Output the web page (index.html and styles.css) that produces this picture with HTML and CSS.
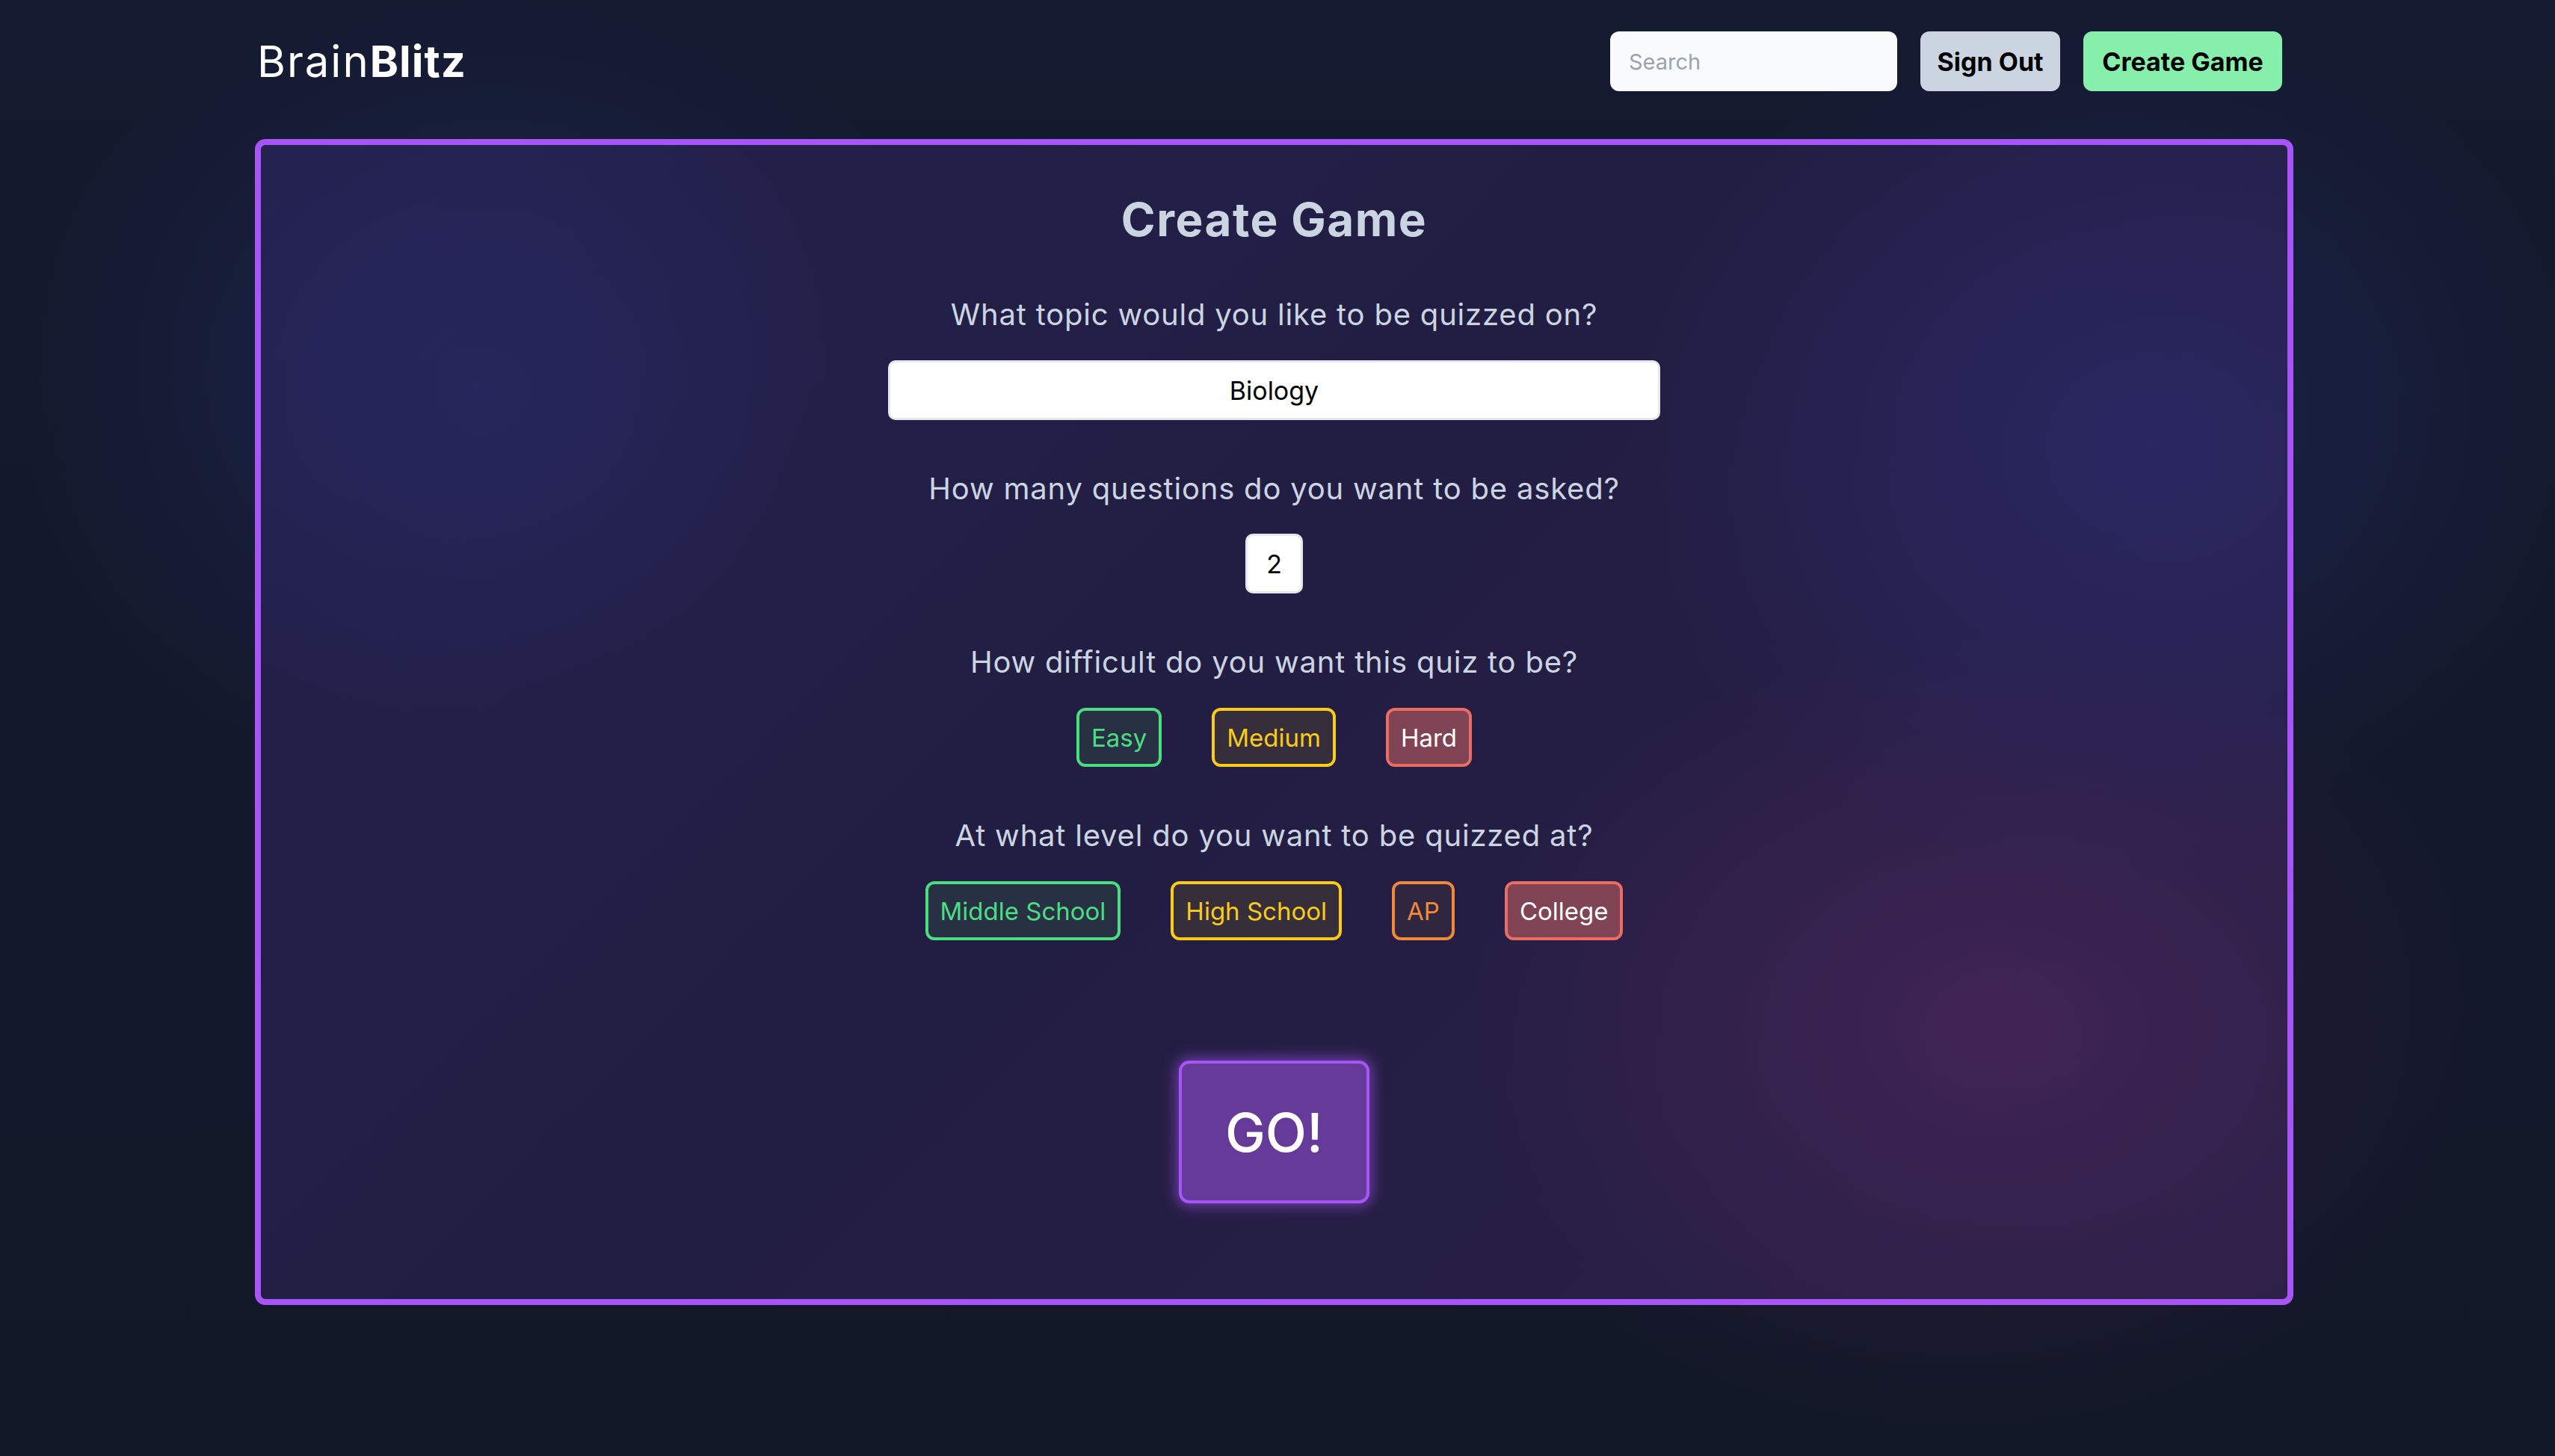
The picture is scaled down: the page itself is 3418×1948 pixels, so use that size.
FILE: index.html
```html
<!DOCTYPE html>
<html lang="en">
<head>
<meta charset="utf-8">
<title>BrainBlitz - Create Game</title>
<link rel="stylesheet" href="styles.css">
</head>
<body>
<div class="page">
  <header class="topbar">
    <div class="logo">Brain<b>Blitz</b></div>
    <nav class="actions">
      <input class="search" type="text" placeholder="Search">
      <button class="btn btn-signout">Sign Out</button>
      <button class="btn btn-create">Create Game</button>
    </nav>
  </header>

  <main class="card">
    <h1 class="title">Create Game</h1>

    <p class="question q-first">What topic would you like to be quizzed on?</p>
    <input class="topic" type="text" value="Biology">

    <p class="question">How many questions do you want to be asked?</p>
    <input class="count" type="text" value="2">

    <p class="question">How difficult do you want this quiz to be?</p>
    <div class="choices">
      <button class="chip chip-green">Easy</button>
      <button class="chip chip-yellow">Medium</button>
      <button class="chip chip-red">Hard</button>
    </div>

    <p class="question">At what level do you want to be quizzed at?</p>
    <div class="choices">
      <button class="chip chip-green">Middle School</button>
      <button class="chip chip-yellow">High School</button>
      <button class="chip chip-orange">AP</button>
      <button class="chip chip-red">College</button>
    </div>

    <button class="go">GO!</button>
  </main>
</div>
</body>
</html>
```

FILE: styles.css
```css
* { box-sizing: border-box; }

html, body {
  margin: 0;
  padding: 0;
}

body {
  min-height: 1948px;
  font-family: "Inter", "Noto Sans", sans-serif;
  color: #cbd5e1;
  background-color: #131829;
  background-image:
    radial-gradient(ellipse 900px 800px at 660px 520px, rgba(40, 52, 130, 0.35), rgba(40, 52, 130, 0) 70%),
    radial-gradient(ellipse 900px 800px at 2830px 560px, rgba(40, 52, 130, 0.35), rgba(40, 52, 130, 0) 70%),
    radial-gradient(ellipse 1000px 800px at 2620px 1350px, rgba(95, 35, 90, 0.30), rgba(95, 35, 90, 0) 70%),
    linear-gradient(180deg, #141a2f 0%, #131828 100%);
}

.page {
  padding-left: 341px;
  width: 3068px;
}

/* ---------- header ---------- */
.topbar {
  display: flex;
  align-items: center;
  justify-content: space-between;
  padding: 42px 15px 0 3px;
  height: 122px;
}

.logo {
  font-size: 58px;
  font-weight: 400;
  color: #ffffff;
  letter-spacing: 2px;
  line-height: 80px;
}
.logo b { font-weight: 700; letter-spacing: 1px; }

.actions {
  display: flex;
  align-items: center;
  gap: 31px;
}

.search {
  width: 384px;
  height: 80px;
  border: none;
  border-radius: 12px;
  background: #f8fafc;
  padding: 0 25px;
  font-family: inherit;
  font-size: 29px;
  color: #111;
  outline: none;
}
.search::placeholder { color: #9ca3af; }

.btn {
  height: 80px;
  border: none;
  border-radius: 12px;
  font-family: inherit;
  font-size: 34px;
  font-weight: 700;
  color: #000;
  padding: 0;
  white-space: nowrap;
  cursor: pointer;
}
.btn-signout { background: #cbd5e1; width: 187px; }
.btn-create { background: #86efac; width: 266px; }

/* ---------- card ---------- */
.card {
  margin-top: 64px;
  height: 1560px;
  border: 8px solid #a855f7;
  border-radius: 14px;
  display: flex;
  flex-direction: column;
  align-items: center;
  padding-top: 61px;
  background-color: #211d41;
  background-image:
    radial-gradient(ellipse 700px 650px at 300px 330px, rgba(45, 50, 125, 0.35), rgba(45, 50, 125, 0) 70%),
    radial-gradient(ellipse 1000px 850px at 2530px 400px, rgba(48, 52, 140, 0.42), rgba(48, 52, 140, 0) 70%),
    radial-gradient(ellipse 1000px 750px at 2320px 1180px, rgba(85, 40, 95, 0.55), rgba(85, 40, 95, 0) 70%),
    linear-gradient(135deg, #23224f 0%, #221d42 45%, #2a2048 100%);
}

.title {
  margin: 0;
  font-size: 62px;
  font-weight: 700;
  letter-spacing: 1.5px;
  line-height: 78px;
  color: #cbd5e1;
}

.question {
  margin: 61px 0 0;
  font-size: 40px;
  line-height: 61px;
  font-weight: 400;
  letter-spacing: 0.8px;
  color: #cbd5e1;
}
.question.q-first { margin-top: 57px; }

.topic {
  margin-top: 31px;
  width: 1033px;
  height: 80px;
  border: 3px solid #e5e7eb;
  border-radius: 10px;
  background: #ffffff;
  text-align: center;
  font-family: inherit;
  font-size: 34px;
  color: #000;
  outline: none;
}

.count {
  margin-top: 30px;
  width: 77px;
  height: 80px;
  border: 3px solid #e5e7eb;
  border-radius: 10px;
  background: #ffffff;
  text-align: center;
  font-family: inherit;
  font-size: 34px;
  color: #000;
  outline: none;
  padding: 0;
}

.choices {
  margin-top: 31px;
  display: flex;
  gap: 67px;
}

.chip {
  height: 79px;
  padding: 0 16px;
  border: 4px solid;
  border-radius: 12px;
  font-family: inherit;
  font-size: 33px;
  font-weight: 400;
  cursor: pointer;
}
.chip-green { border-color: #4ade80; color: #4ade80; background: #283043; }
.chip-yellow { border-color: #facc15; color: #facc15; background: #372e3c; }
.chip-orange { border-color: #f0893a; color: #f0893a; background: #30263f; }
.chip-red { border-color: #ec6b63; color: #ffffff; background: #804454; }

.go {
  margin-top: 161px;
  width: 255px;
  height: 191px;
  border: 4px solid #a855f7;
  border-radius: 14px;
  background: #663a99;
  color: #ffffff;
  font-family: inherit;
  font-size: 72px;
  font-weight: 500;
  box-shadow: 0 0 18px 4px rgba(168, 85, 247, 0.55);
  cursor: pointer;
}
```
